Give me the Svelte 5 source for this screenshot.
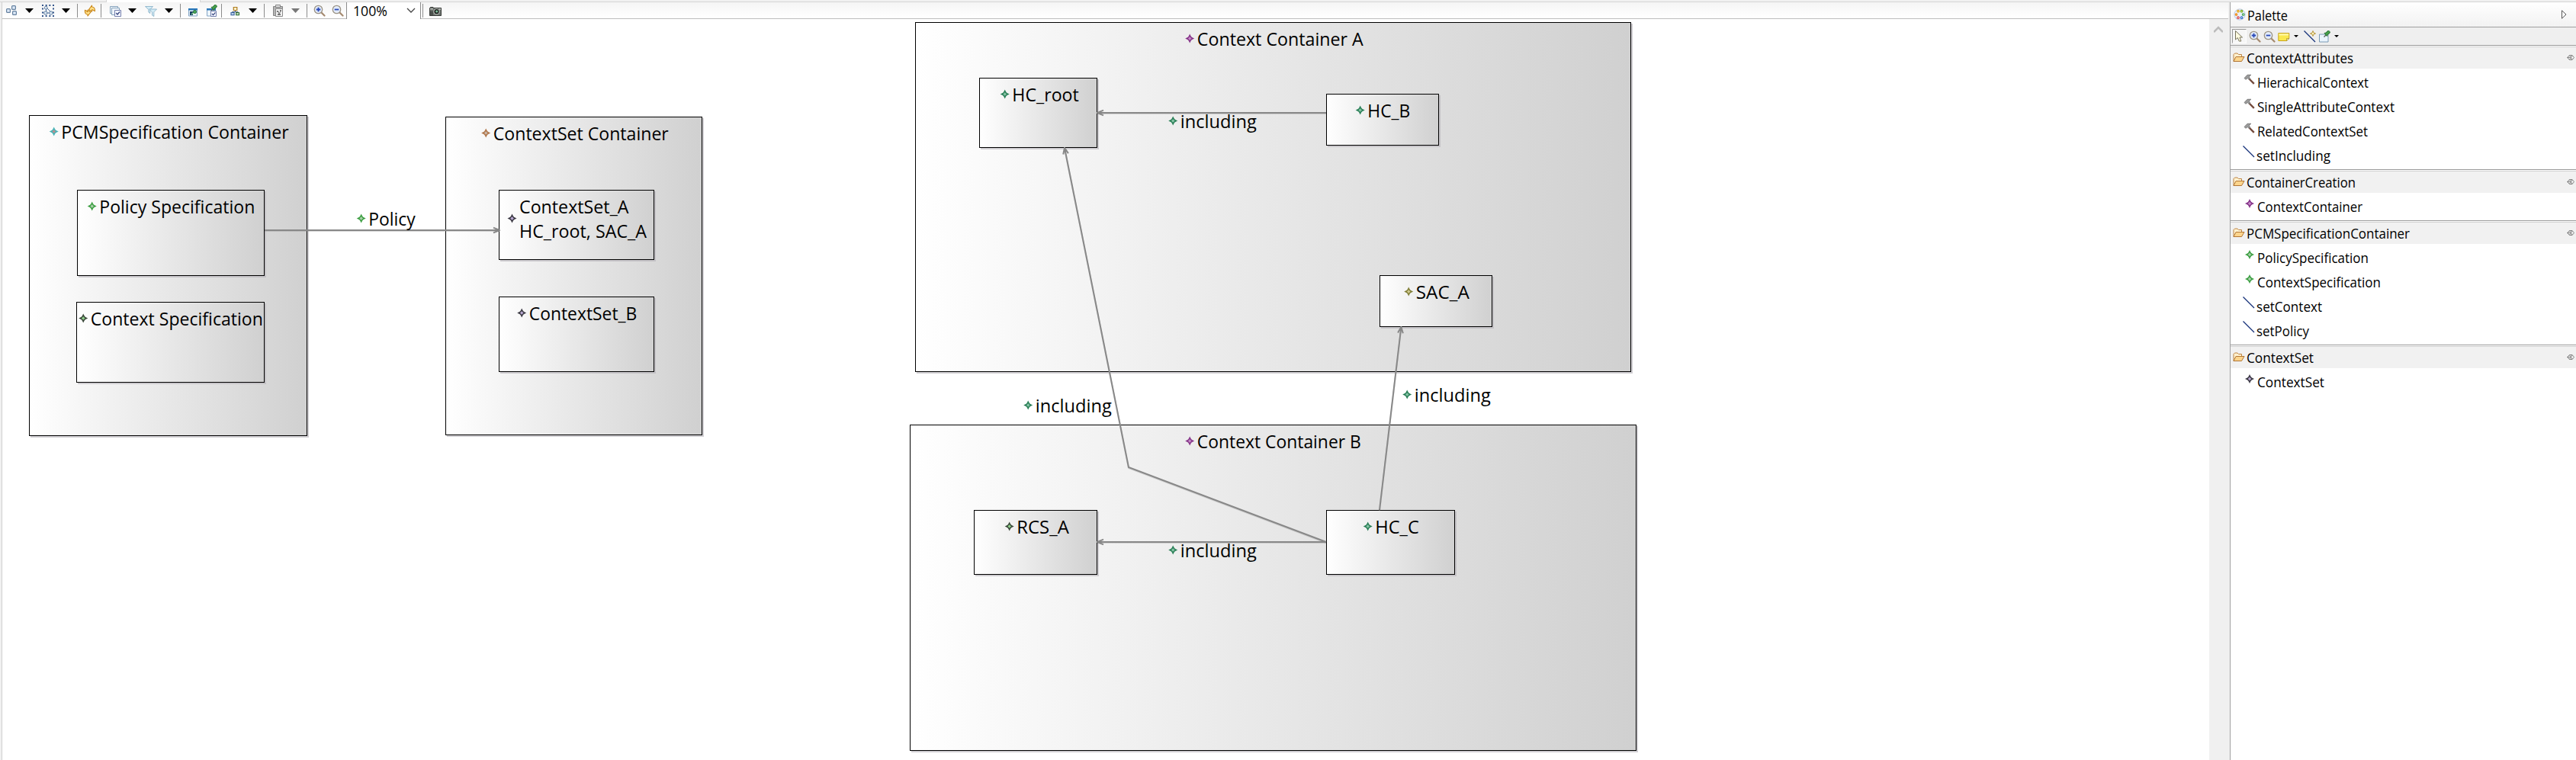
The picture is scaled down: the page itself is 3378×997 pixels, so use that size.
<script>
  const tools = [
    ['squares', 7], ['arrow', 33], ['marquee', 55], ['arrow', 81], ['sep', 101],
    ['refresh', 110], ['sep', 132], ['layers', 143], ['arrow', 168], ['filter', 190],
    ['arrow', 216], ['sep', 236], ['window', 245], ['windowpin', 269], ['sep', 290],
    ['org', 300], ['arrow', 326], ['sep', 346], ['paste', 357], ['arrowoff', 382],
    ['sep', 402], ['zoomin', 411], ['zoomout', 435], ['combo', 454], ['sep', 554], ['camera', 563]
  ];
  const widths = { arrow: 11, arrowoff: 11, sep: 1, combo: 98 };
  let edge = 3;
  const toolbar = tools.map(([kind, x]) => {
    const w = widths[kind] ?? 16;
    const gap = x - edge;
    edge = x + w;
    return { kind, w, gap };
  });

  const green = ['#3fa045', '#a9cfaa'];
  const teal = ['#2c8059', '#85c3a4'];
  const purple = ['#87378a', '#c488c6'];
  const dark = ['#3d3b45', '#b9a8d2'];
  const moss = ['#3c4a3c', '#8fd08b'];

  const boxes = [
    [38, 151, 365, 421], [584, 153, 337, 418], [1200, 29, 939, 459], [1193, 557, 953, 428],
    [101, 249, 246, 113], [100, 396, 247, 106], [654, 249, 204, 92], [654, 389, 204, 99],
    [1284, 102, 155, 92], [1739, 123, 148, 68], [1809, 361, 148, 68],
    [1277, 669, 162, 85], [1739, 669, 169, 85]
  ];
  // text, ink start, ink end, baseline, star colours
  const labels = [
    ['PCMSpecification Container', 81.5, 378, 182, ['#4bb5b8', '#b88f8f']],
    ['Policy Specification', 131.5, 333.5, 280, green],
    ['Context Specification', 120, 344, 427, moss],
    ['ContextSet Container', 648, 876, 184, ['#b0764a', '#c9b7a8']],
    ['ContextSet_B', 695, 834.5, 420, dark],
    ['Policy', 484.5, 544, 296, green],
    ['Context Container A', 1571, 1787, 60, purple],
    ['Context Container B', 1571, 1784, 588, purple],
    ['HC_root', 1328.5, 1414, 133, teal],
    ['HC_B', 1794.5, 1848.5, 154, teal],
    ['SAC_A', 1858, 1926, 392, ['#83803a', '#d0c98f']],
    ['RCS_A', 1334.5, 1401, 700, moss],
    ['HC_C', 1804.5, 1860, 700, teal],
    ['including', 1549, 1647, 168, teal],
    ['including', 1359, 1457, 541, teal],
    ['including', 1856, 1954, 527, teal],
    ['including', 1549, 1647, 731, teal]
  ];
  const edges = [
    'M347 302H655', 'M1739 148H1439', 'M1739 711H1439',
    'M1739 711L1480 613L1396 194', 'M1809 669L1837.4 429'
  ];

  const sections = [
    { name: 'ContextAttributes', w: 138, items: [
      ['hammer', 'HierachicalContext', 144], ['hammer', 'SingleAttributeContext', 178],
      ['hammer', 'RelatedContextSet', 143], ['line', 'setIncluding', 95]] },
    { name: 'ContainerCreation', w: 141, items: [['star', 'ContextContainer', 136, purple]] },
    { name: 'PCMSpecificationContainer', w: 212, items: [
      ['star', 'PolicySpecification', 144, green], ['star', 'ContextSpecification', 160, green],
      ['line', 'setContext', 84], ['line', 'setPolicy', 67]] },
    { name: 'ContextSet', w: 86, items: [['star', 'ContextSet', 86, dark]] }
  ];
</script>

{#snippet label(text, w, base)}
  <svg class="label" width={w + 4} height="30"><text x="-1" y={base} textLength={w + 2} lengthAdjust="spacingAndGlyphs">{text}</text></svg>
{/snippet}

{#snippet star(x, y, c)}
  <g transform="translate({x} {y})">
    <path d="M0-6L2-2L6 0L2 2L0 6L-2 2L-6 0L-2-2Z" fill={c[0]} />
    <path d="M0-3.2L3.2 0L0 3.2L-3.2 0Z" fill={c[1]} stroke={c[0]} stroke-width="1.3" />
  </g>
{/snippet}

{#snippet lens(minus)}
  <path d="M10 10L14.5 14.5" stroke="#a58a70" stroke-width="2.2" stroke-linecap="round" />
  <circle cx="6.5" cy="6.5" r="5.2" fill="#e3ecfa" stroke="#9b9385" stroke-width="1.3" />
  <path d={minus ? 'M3.7 6.5H9.3' : 'M3.7 6.5H9.3M6.5 3.7V9.3'} stroke="#2a49b8" stroke-width="1.8" />
{/snippet}

{#snippet pushpin()}
  <path d="M7.5 8.5L10.5 5.5" stroke="#56615a" stroke-width="1.3" />
  <path d="M8 3.5L11.5 7.5L12.5 5.2L15 3.5L15.4 1.8L13.8.4L12 .8L10.2 3Z" fill="#44a04a" stroke="#22682d" stroke-width=".9" />
{/snippet}

{#snippet icon(kind)}
  <svg width="16" height="16" viewBox="0 0 16 16" fill="none">
    {#if kind === 'squares'}
      <g fill="#dde9f7" stroke="#64809f" stroke-width="1.2">
        <rect x="1.6" y="5.6" width="4.8" height="4.8" rx="1" /><rect x="8.6" y="1.6" width="4.8" height="4.8" rx="1" /><rect x="9.6" y="8.6" width="4.8" height="4.8" rx="1" />
      </g>
    {:else if kind === 'marquee'}
      <path d="M0 1H16M0 15H16" stroke="#35568c" stroke-width="2" stroke-dasharray="2 2.66" />
      <path d="M1 2V14M15 2V14" stroke="#35568c" stroke-width="2" stroke-dasharray="2 3" stroke-dashoffset="-2.5" />
      <path d="M5.5 5V9M7 5L11.5 9.5M6 11H10" stroke="#44679c" />
      <g fill="#dde9f7" stroke="#64809f"><rect x="3.5" y="2.5" width="3.5" height="3.5" rx="1" /><rect x="2.8" y="9" width="4" height="4" rx="1" /><rect x="9.8" y="9" width="4" height="4" rx="1" /></g>
    {:else if kind === 'refresh'}
      <g fill="#ffe08a" stroke="#c98616" stroke-width="1.1" stroke-linejoin="round">
        <path d="M6.5 6.5L10.5 1.2V3Q14.8 3.2 14.4 8.6L12.2 7.6Q12 6.6 10.5 6.7V9.2Z" />
        <path d="M9 10L5 15V13Q1 12.8 1.4 7.3L3.6 8.2Q3.8 9.6 5 9.6V7Z" />
      </g>
    {:else if kind === 'layers'}
      <g fill="#eef4fa" stroke="#88a4bd"><path d="M1.5 2.5H11.5V11.5H1.5Z" /><path d="M3.5 4.5H13.5V13.5H3.5Z" /></g>
      <path d="M7.5 7.5H15.5V15.5H7.5Z" fill="#f5f7ff" stroke="#7580ad" />
      <path d="M9.3 11L11 13L14 9.5" stroke="#35457e" stroke-width="1.3" />
    {:else if kind === 'filter'}
      <g fill="#d5edf7" stroke="#8cb3c9" stroke-width=".9">
        <path d="M.5 2.5H10.5L6.8 6.5V11.5L4.8 10V6.5Z" /><path d="M5.5 6H15.5L11.8 9.8V15.5L9.5 14V9.8Z" />
      </g>
    {:else if kind === 'window' || kind === 'windowpin'}
      <path d="M2.5 5.5H13.5V15H2.5Z" fill="#edf5fc" stroke="#84a5c5" />
      <path d="M2 5H14V7.5H2Z" fill="#2876b9" />
      {#if kind === 'window'}
        <path d="M4 9H8V14H4Z" fill="#183f68" /><path d="M6 13L11 8" stroke="#7ccb83" stroke-width="1.4" /><circle cx="10.5" cy="9.5" r="2" fill="#4fae5b" stroke="#1b6734" />
      {:else}
        {@render pushpin()}
        <path d="M7.5 8.5H14.5V15.5H7.5Z" fill="#f5f7ff" stroke="#7580ad" /><path d="M9 12L10.6 13.6L13.4 10.4" stroke="#35457e" stroke-width="1.2" />
      {/if}
    {:else if kind === 'org'}
      <path d="M8.5 7V9.5M4.5 11.5V9.5H12V11.5" stroke="#51657d" />
      <path d="M6.3 3.5H10.8V7.5H6.3Z" fill="#fff3cb" stroke="#ad7a1e" stroke-width="1.2" />
      <path d="M3 10.7H7.1V13.6H3Z" fill="#d9e7fa" stroke="#3e68a4" stroke-width="1.2" />
      <path d="M9.6 10.7H13.5V13.6H9.6Z" fill="#d8efcc" stroke="#3b7442" stroke-width="1.2" />
    {:else if kind === 'paste'}
      <path d="M1.5 2.5H13.5V14.5H1.5Z" fill="#b5b5b5" stroke="#858585" /><path d="M4.5.5H10.5V3.5H4.5Z" fill="#ddd" stroke="#858585" />
      <path d="M4.5 5.5H13.5V15.5H4.5Z" fill="#f1f1f1" stroke="#8b8b8b" /><path d="M6 8H8V10H6ZM10 7H12V9H10ZM7 12H11V14H7Z" fill="#777" /><path d="M8 9L9 12L11 9" stroke="#777" />
    {:else if kind === 'zoomin'}
      {@render lens(false)}
    {:else if kind === 'zoomout'}
      {@render lens(true)}
    {:else if kind === 'camera'}
      <path d="M.5 4.5H1.5V3.5H5V4.5H15.5V14.5H.5Z" fill="#6c726d" stroke="#3a3d3a" />
      <path d="M1 5H5V6.5H1ZM12.5 5H15V7H12.5Z" fill="#b4b8b4" />
      <path d="M1 8.5H5V14H1Z" fill="#4c504d" />
      <circle cx="9.5" cy="9.2" r="3.7" fill="#1d1f1d" stroke="#b3b8b3" stroke-width="1.2" /><circle cx="9.7" cy="9" r="1.5" fill="#7fc39f" />
    {:else if kind === 'palette'}
      <circle cx="8" cy="8" r="7.1" fill="#eaf1fb" stroke="#b9c8e3" />
      <g stroke-width="1.1" fill="#fff"><circle cx="6" cy="3.7" r="1.3" stroke="#e2a01b" fill="#ffe36a" /><circle cx="10.5" cy="3.7" r="1.3" stroke="#76a71d" fill="#dcf58a" /><circle cx="3.5" cy="8" r="1.3" stroke="#ef8b18" fill="#ffb648" /><circle cx="12.7" cy="8" r="1.3" stroke="#2e9943" /><circle cx="6" cy="12.2" r="1.3" stroke="#d6363e" /><circle cx="10.5" cy="12.2" r="1.3" stroke="#2864c2" /></g>
    {:else if kind === 'cursor'}
      <path d="M3.5 1.5V13L6.3 10.5L8.3 15H10.8L9 10H12.5Z" fill="#fffbe0" stroke="#76725b" />
    {:else if kind === 'note'}
      <path d="M.8 3.5H14.8V10.5L11.5 13.5H.8Z" fill="#fae84e" stroke="#c8a51f" /><path d="M14.8 10.5H11.5V13.5Z" fill="#fff9c3" stroke="#a98a18" stroke-width=".7" /><path d="M1.5 4.2H14V6.5H1.5Z" fill="#fff5a0" />
    {:else if kind === 'link'}
      <path d="M.5.5L15 15" stroke="#142f78" stroke-width="1.3" /><path d="M12 .5L13 3L15.5 4L13 5L12 7.5L11 5L8.5 4L11 3Z" fill="#fff5bd" stroke="#b18c32" stroke-width=".9" />
    {:else if kind === 'pin'}
      <path d="M1.5 5H13V15H1.5Z" fill="#eaf4fd" stroke="#7b9ab4" />{@render pushpin()}
    {:else if kind === 'folder'}
      <path d="M1 13.5V4.5L2.5 3H6L7.5 4.5H11.5V7.5" fill="#fff1cf" stroke="#bd8443" stroke-linejoin="round" /><path d="M1 13.5L4 7.5H15L11.5 13.5Z" fill="#fbd58d" stroke="#b27635" stroke-linejoin="round" />
    {:else if kind === 'hammer'}
      <path d="M7 6L13.8 12.8" stroke="#744b3c" stroke-width="2.4" /><path d="M1 5.5L5 1.3L9.8 1.2L7 4L9 6L7.2 7.5L5.3 5.5L3 7.3Z" fill="#9b9b9b" stroke="#6d6d6d" stroke-width=".8" />
    {:else if kind === 'line'}
      <path d="M.5.5L15 15" stroke="#142f78" stroke-width="1.3" />
    {/if}
  </svg>
{/snippet}

<div class="app">
  <div class="tabs"><div class="tab"></div></div>
  <div class="body">
    <main>
      <div class="toolbar">
        {#each toolbar as t}
          <div class="tool {t.kind}" style="width:{t.w}px;margin-left:{t.gap}px">
            {#if t.kind === 'combo'}
              {@render label('100%', 43, 18)}
              <svg width="12" height="8"><path d="M1 1L6 6L11 1" fill="none" stroke="#444" stroke-width="1.3" /></svg>
            {:else if t.kind === 'arrow' || t.kind === 'arrowoff'}
              <svg width="11" height="6"><path d="M0 0H11L5.5 6Z" fill={t.kind === 'arrow' ? '#000' : '#777'} /></svg>
            {:else if t.kind !== 'sep'}
              {@render icon(t.kind)}
            {/if}
          </div>
        {/each}
      </div>
      <div class="canvas">
        <svg class="diagram" width="2894" height="972" viewBox="3 25 2894 972">
          <defs>
            <linearGradient id="fill"><stop offset="0" stop-color="#fff" /><stop offset="1" stop-color="#d0d0d0" /></linearGradient>
            <marker id="tip" viewBox="-9 -5 10 10" markerWidth="10" markerHeight="10" markerUnits="userSpaceOnUse" orient="auto">
              <path d="M-8-3.4L0 0L-8 3.4" fill="none" stroke="#888" stroke-width="2" />
              <path d="M-5-2L0 0L-5 2Z" fill="#888" />
            </marker>
          </defs>
          {#each boxes as [x, y, w, h]}
            <rect x={x + 2} y={y + 2} width={w} height={h} fill="#b9b5bb" fill-opacity=".65" />
            <rect x={x + 0.5} y={y + 0.5} width={w - 1} height={h - 1} fill="url(#fill)" stroke="#000" />
          {/each}
          {#each edges as d}
            <path {d} fill="none" stroke="#888" stroke-opacity=".3" stroke-width="2" transform="translate(0 1)" />
            <path {d} fill="none" stroke="#888" stroke-width="2" marker-end="url(#tip)" />
          {/each}
          {#each labels as [text, x1, x2, y, c]}
            {@render star(x1 - 10.8, y - 9.5, c)}
            <text x={x1 - 1.2} {y} textLength={x2 - x1 + 2} lengthAdjust="spacingAndGlyphs">{text}</text>
          {/each}
          {@render star(671.5, 286.5, dark)}
          <text x="681" y="280" textLength="143.5" lengthAdjust="spacingAndGlyphs">ContextSet_A</text>
          <text x="681" y="312" textLength="167" lengthAdjust="spacingAndGlyphs">HC_root, SAC_A</text>
        </svg>
        <div class="scroll"><svg width="12" height="9"><path d="M0 8L6 2L12 8" fill="none" stroke="#bcbcbc" stroke-width="2.6" /></svg></div>
      </div>
    </main>
    <aside>
      <header>
        {@render icon('palette')}
        {@render label('Palette', 51, 24)}
        <svg class="expand" width="7" height="12"><path d="M.5.8V11.2L6 6Z" fill="#fff" stroke="#555" /></svg>
      </header>
      <div class="ptools">
        <div class="picked">{@render icon('cursor')}</div>
        {@render icon('zoomin')}
        {@render icon('zoomout')}
        {@render icon('note')}
        <svg class="drop" width="6" height="3"><path d="M0 0H6L3 3Z" /></svg>
        {@render icon('link')}
        {@render icon('pin')}
        <svg class="drop" width="6" height="3"><path d="M0 0H6L3 3Z" /></svg>
      </div>
      {#each sections as s}
        <section>
          <h2>
            {@render icon('folder')}
            {@render label(s.name, s.w, 23)}
            <svg class="tack" width="10" height="7" fill="none" stroke="#777" stroke-width=".9"><path d="M.5 3.5L3.5.5H7L9.5 3.5L7 6.5H3.5ZM3.5.8L7 6.2M7 .8L3.5 6.2M1 3.5H4" /></svg>
          </h2>
          {#each s.items as [kind, text, w, c]}
            <div class="item {kind}">
              {#if kind === 'star'}
                <svg width="16" height="16">{@render star(8, 8, c)}</svg>
              {:else}
                {@render icon(kind)}
              {/if}
              {@render label(text, w, 25)}
            </div>
          {/each}
        </section>
      {/each}
    </aside>
  </div>
</div>

<style>
  :global(body) { background: #fff; overflow: hidden; }
  .app { width: 3378px; height: 997px; display: flex; flex-direction: column; background: #f0f0f0; font-family: "Open Sans", "Noto Sans", sans-serif; }
  svg { display: block; flex: none; }
  text { font-family: "Open Sans", "Noto Sans", sans-serif; font-weight: 400; }
  .tabs { height: 3px; box-sizing: border-box; border-bottom: 1px solid #d5d5d5; padding-left: 139px; }
  .tab { width: 124px; height: 3px; background: #fff; border: solid #d5d5d5; border-width: 0 1px; box-sizing: border-box; }
  .body { flex: 1; display: flex; min-height: 0; padding-left: 2px; }
  main { width: 2920px; border-left: 1px solid #d0d0d0; box-sizing: border-box; display: flex; flex-direction: column; }
  .toolbar { height: 22px; box-sizing: border-box; border-bottom: 1px solid #bdbdbd; background: linear-gradient(#f5f5f5, #fff); display: flex; align-items: flex-start; }
  .tool { flex: none; padding-top: 3px; }
  .arrow, .arrowoff { padding-top: 8px; }
  .sep { height: 18px; margin-top: 2px; padding: 0; background: #8c8c8c; }
  .combo { height: 22px; padding: 0; box-sizing: border-box; background: #fff; border: solid #8c8c8c; border-width: 0 1px; display: flex; align-items: center; }
  .combo .label { height: 22px; margin-left: 9px; margin-right: 22px; }
  .label { overflow: visible; font-size: 18px; }
  .canvas { flex: 1; display: flex; background: #fff; }
  .diagram { font-size: 23px; }
  .scroll { width: 25px; background: #f0f0f0; padding-top: 9px; }
  .scroll svg { margin-left: 6px; }
  aside { flex: 1; margin-left: 2px; border-left: 1px solid #a0a0a0; background: #fff; }
  header { height: 33px; box-sizing: border-box; border-bottom: 1px solid #a0a0a0; background: linear-gradient(#fff, #f2f2f2); display: flex; padding-left: 4px; }
  header > svg:first-child { margin: 8px 3px 0 0; }
  .expand { margin: 10px 12px 0 auto; }
  .ptools { height: 23px; background: #efefef; display: flex; align-items: center; }
  .ptools > svg { margin-left: 3px; }
  .ptools > .drop { margin: 0 4px 0 5px; }
  .ptools > .drop + svg { margin-left: 3px; }
  .picked { width: 17px; height: 17px; margin-left: 2px; border: 1px solid #999; border-color: #999 #fff #fff #999; background: #f6f6f6; }
  section { padding-bottom: 4px; }
  h2 { margin: 0; height: 31px; box-sizing: border-box; border-top: 1px solid #999; background: #f1f1f1; box-shadow: inset 0 1px #fff, inset 0 2px #d2d2d2; display: flex; padding-left: 3px; }
  h2 > svg:first-child { margin: 7px 3px 0 0; }
  .tack { margin: 12px 2px 0 auto; }
  .item { height: 32px; display: flex; padding-left: 17px; }
  .item > svg:first-child { margin: 7px 3px 0 0; }
  .item.star > svg:first-child { margin-top: 6px; }
  .item.line { padding-left: 16px; }
  .item.line > svg:first-child { margin-top: 5px; }
</style>
